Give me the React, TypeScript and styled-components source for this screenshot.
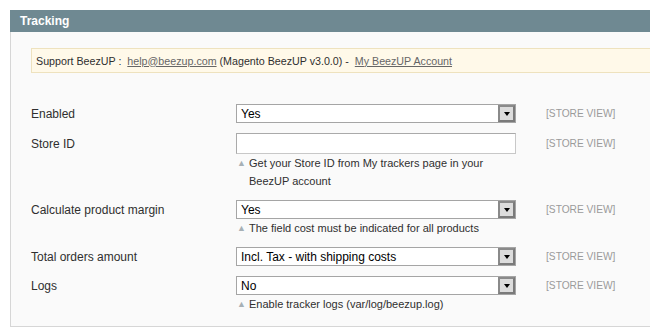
import React from "react";
import styled, { createGlobalStyle } from "styled-components";

const Global = createGlobalStyle`
  html, body { margin: 0; padding: 0; background: #ffffff; overflow: hidden; }
  body { font-family: "Liberation Sans", Arial, sans-serif; color: #2f2f2f; }
`;

const Page = styled.div`
  padding: 10px 0 0 10px;
  width: 700px;
`;

const Head = styled.div`
  height: 22px;
  background: #6f8992;
  padding: 0 10px;
  display: flex;
  align-items: center;
`;

const HeadTitle = styled.h4`
  margin: 0;
  font-size: 12px;
  font-weight: bold;
  color: #ffffff;
  line-height: 22px;
`;

const Fieldset = styled.div`
  background: #fafafa;
  border: 1px solid #d6d6d6;
  border-top: none;
  padding: 16px 20px 8px 20px;
`;

const Notice = styled.div`
  height: 25px;
  box-sizing: border-box;
  background: #fff9e9;
  border: 1px solid #eee2be;
  padding: 0 4px;
  display: flex;
  align-items: center;
  font-size: 10.7px;
  color: #2f2f2f;
  white-space: pre;
`;

const NoticeLink = styled.a`
  color: #666666;
  text-decoration: underline;
`;

const Form = styled.div`
  margin-top: 26px;
  display: grid;
  grid-template-columns: 175px 280px auto;
  column-gap: 30px;
`;

const Label = styled.div<{ $h: number }>`
  padding: 6px 0 4px;
  font-size: 12px;
  color: #2f2f2f;
  line-height: ${(p) => p.$h}px;
`;

const Value = styled.div`
  padding: 5px 0;
  display: flex;
  flex-direction: column;
`;

const Scope = styled.div<{ $h: number }>`
  padding: 5px 0;
  font-size: 10.2px;
  color: #9a9a9a;
  line-height: ${(p) => p.$h}px;
`;

const SelectBox = styled.div`
  height: 19px;
  box-sizing: border-box;
  border: 1px solid #a5a5a5;
  background: #ffffff;
  display: flex;
  align-items: center;
  justify-content: space-between;
  padding-left: 4px;
  font-size: 12px;
  color: #000000;
`;

const SelectArrow = styled.div`
  width: 17px;
  height: 17px;
  box-sizing: border-box;
  border: 2px solid #7a7a7a;
  border-top-color: #8a8a8a;
  border-left-color: #8a8a8a;
  background: #dcdcdc;
  display: flex;
  align-items: center;
  justify-content: center;
  &::after {
    content: "";
    width: 0;
    height: 0;
    border-left: 3.5px solid transparent;
    border-right: 3.5px solid transparent;
    border-top: 4px solid #000000;
    margin-top: 1px;
  }
`;

const TextInput = styled.div`
  height: 21px;
  box-sizing: border-box;
  border: 1px solid #c8c8c8;
  border-top-color: #aaaaaa;
  border-left-color: #aaaaaa;
  background: #ffffff;
`;

const Note = styled.div`
  display: flex;
  font-size: 11px;
  line-height: 18px;
  color: #2f2f2f;
`;

const NoteMark = styled.span`
  flex: 0 0 13px;
  color: #a7b0b5;
  font-size: 9px;
  padding-left: 1px;
  box-sizing: border-box;
`;

const NoteText = styled.span`
  width: 245px;
`;

type Row = {
  label: string;
  kind: "select" | "input";
  value?: string;
  note?: string;
};

const rows: Row[] = [
  { label: "Enabled", kind: "select", value: "Yes" },
  {
    label: "Store ID",
    kind: "input",
    note: "Get your Store ID from My trackers page in your BeezUP account",
  },
  {
    label: "Calculate product margin",
    kind: "select",
    value: "Yes",
    note: "The field cost must be indicated for all products",
  },
  { label: "Total orders amount", kind: "select", value: "Incl. Tax - with shipping costs" },
  { label: "Logs", kind: "select", value: "No", note: "Enable tracker logs (var/log/beezup.log)" },
];

export default function App() {
  return (
    <>
      <Global />
      <Page>
        <Head>
          <HeadTitle>Tracking</HeadTitle>
        </Head>
        <Fieldset>
          <Notice>
            {"Support BeezUP :  "}
            <NoticeLink>help@beezup.com</NoticeLink>
            {" (Magento BeezUP v3.0.0) -  "}
            <NoticeLink>My BeezUP Account</NoticeLink>
          </Notice>
          <Form>
            {rows.map((r) => {
              const h = r.kind === "input" ? 21 : 19;
              return (
                <React.Fragment key={r.label}>
                  <Label $h={h}>{r.label}</Label>
                  <Value>
                    {r.kind === "select" ? (
                      <SelectBox>
                        <span>{r.value}</span>
                        <SelectArrow />
                      </SelectBox>
                    ) : (
                      <TextInput />
                    )}
                    {r.note && (
                      <Note>
                        <NoteMark>▲</NoteMark>
                        <NoteText>{r.note}</NoteText>
                      </Note>
                    )}
                  </Value>
                  <Scope $h={h}>[STORE VIEW]</Scope>
                </React.Fragment>
              );
            })}
          </Form>
        </Fieldset>
      </Page>
    </>
  );
}
